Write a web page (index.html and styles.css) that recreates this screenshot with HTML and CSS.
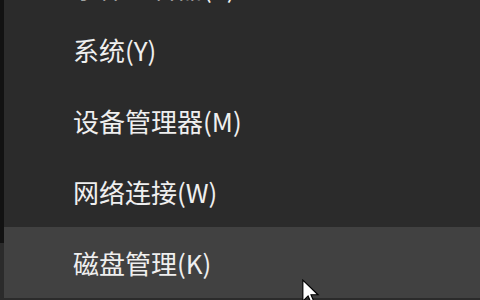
FILE: index.html
```html
<!DOCTYPE html>
<html lang="zh-CN">

<head>
    <meta charset="UTF-8">
    <title>Win+X 菜单</title>
    <link rel="stylesheet" href="styles.css">
</head>

<body>
    <ul class="menu">
        <li class="menu-item cut">事件查看器(V)</li>
        <li class="menu-item">系统(Y)</li>
        <li class="menu-item">设备管理器(M)</li>
        <li class="menu-item">网络连接(W)</li>
        <li class="menu-item hover">磁盘管理(K)</li>
    </ul>

    <!-- puntero del raton -->
    <svg class="cursor" width="20" height="28" viewBox="0 0 16 24">
        <path d="M1 1 L1 19 L5.5 14.5 L8.5 21.5 L11 20.5 L8 13.5 L14 13.5 Z" fill="#fff" stroke="#000" stroke-width="1"/>
    </svg>
</body>

</html>
```

FILE: styles.css
```css
body {
    margin: 0;
    background-color: #2b2b2b;
    font-family: "Noto Sans CJK SC", "Microsoft YaHei", sans-serif;
    overflow: hidden;
    height: 300px;
    position: relative;
}

.menu {
    list-style: none;
    margin: 0;
    padding: 0;
    border-left: 4px solid #121212;
    height: 300px;
    box-sizing: border-box;
}

.menu-item {
    height: 71px;
    display: flex;
    align-items: center;
    padding-left: 69px;
    box-sizing: border-box;
    color: #efefef;
    font-size: 26px;
    line-height: 1;
}

.menu-item.cut {
    margin-top: -57px;
    padding-top: 16px;
}

.menu-item.hover {
    background-color: #414141;
}

.cursor {
    position: absolute;
    left: 301px;
    top: 279px;
}
```
